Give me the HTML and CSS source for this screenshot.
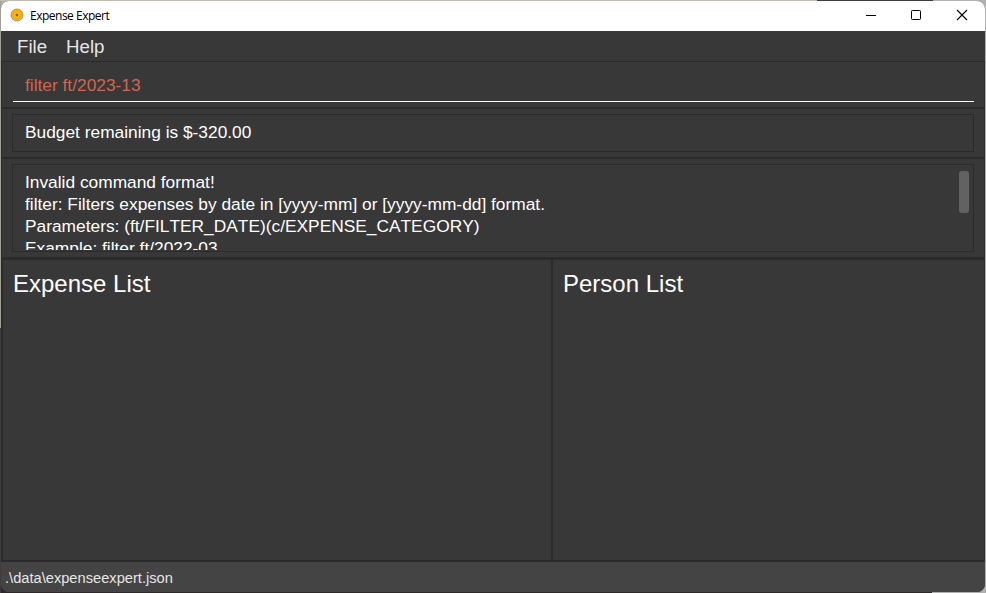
FILE: index.html
```html
<!DOCTYPE html>
<html lang="en">
<head>
<meta charset="utf-8">
<title>Expense Expert</title>
<link rel="stylesheet" href="styles.css">
</head>
<body>
<div class="window">
  <header class="titlebar">
    <svg class="logo" width="14" height="14" viewBox="0 0 14 14"><circle cx="7" cy="7" r="6" fill="#fdb40e" stroke="#8d8570" stroke-width=".8"/><circle cx="7" cy="7" r="4" fill="none" stroke="#f0a408" stroke-width=".7"/><circle cx="7" cy="7" r="1.3" fill="#6b6b60"/></svg>
    <span class="title">Expense Expert</span>
    <div class="controls">
      <svg width="12" height="12" viewBox="0 0 12 12"><path d="M1 6.5h10" stroke="#000"/></svg>
      <svg width="12" height="12" viewBox="0 0 12 12"><rect x="1.5" y="1.5" width="9" height="9" rx=".8" fill="none" stroke="#000"/></svg>
      <svg width="12" height="12" viewBox="0 0 12 12"><path d="M1 1l10 10M11 1L1 11" stroke="#000" stroke-width="1.1"/></svg>
    </div>
  </header>
  <nav class="menu"><span>File</span><span>Help</span></nav>
  <section class="command"><div class="field">filter ft/2023-13</div></section>
  <section class="budget"><div class="box">Budget remaining is $-320.00</div></section>
  <section class="result">
    <div class="box result-box">
      <div class="lines">
        <div>Invalid command format!</div>
        <div>filter: Filters expenses by date in [yyyy-mm] or [yyyy-mm-dd] format.</div>
        <div>Parameters: (ft/FILTER_DATE)(c/EXPENSE_CATEGORY)</div>
        <div>Example: filter ft/2022-03</div>
      </div>
      <div class="thumb"></div>
    </div>
  </section>
  <main class="lists">
    <section class="expenses"><h2>Expense List</h2></section>
    <section class="persons"><h2>Person List</h2></section>
  </main>
  <footer class="status">.\data\expenseexpert.json</footer>
</div>
</body>
</html>
```
FILE: styles.css
```css
* { box-sizing: border-box; }
body {
  margin: 0;
  height: 593px;
  padding: 1px;
  overflow: hidden;
  background:
    linear-gradient(#403c3e, #403c3e) 817px 0 / 116px 1px no-repeat,
    linear-gradient(#c1bbae, #c1bbae) 0 0 / 817px 1px no-repeat,
    linear-gradient(#a3a196, #a3a196) 0 0 / 1px 328px no-repeat,
    linear-gradient(#403c3c, #403c3c) 0 328px / 1px 265px no-repeat,
    linear-gradient(#2f2829, #2f2829) 0 585px / 932px 8px no-repeat,
    #b0b0b0;
  font-family: "Liberation Sans", Arial, sans-serif;
  font-kerning: none;
  color: #fff;
}
.window {
  display: flex;
  flex-direction: column;
  height: 591px;
  border-radius: 8px;
  overflow: hidden;
  background: #383838;
}
.titlebar {
  display: flex;
  align-items: center;
  flex: 0 0 30px;
  padding: 0 17px 0 9px;
  background: #fff;
  color: #000;
}
.logo { margin-top: -2px; }
.title {
  margin-left: 6px;
  font: 12px/16px "Open Sans", "Noto Sans", sans-serif;
  letter-spacing: -.5px;
}
.controls { display: flex; gap: 33px; margin-left: auto; }
.controls svg { display: block; margin-top: -2px; }
.controls svg:last-child { margin-left: 1px; }
.menu {
  display: flex;
  gap: 19px;
  flex: 0 0 30px;
  min-height: 0;
  padding-left: 16px;
  font-size: 18.67px;
  line-height: 31px;
  color: #e6e6e6;
}
.command, .budget, .result {
  padding: 0 11px;
  border: solid #2b2b2b;
  border-width: 0 1px 2px;
}
.command { flex: 0 0 48px; padding-right: 10px; border-top-width: 1px; }
.field {
  height: 40px;
  border-bottom: 1px solid #fff;
  padding-left: 12px;
  font-size: 17.33px;
  line-height: 47px;
  color: #d06651;
}
.budget { flex: 0 0 50px; padding: 5px 10px; }
.box { border: 1px solid #2b2b2b; font-size: 17.33px; line-height: 22px; }
.budget .box { height: 38px; padding: 6px 12px; }
.result { flex: 0 0 101px; padding: 5px 10px; border-bottom-width: 3px; }
.result-box {
  display: flex;
  justify-content: space-between;
  height: 88px;
  padding: 6px 4px 1px 12px;
}
.lines { height: 79px; overflow: hidden; white-space: nowrap; }
.thumb { width: 10px; height: 42px; border-radius: 3px; background: #626262; }
.lists { display: flex; flex: 1; border-bottom: 2px solid #2b2b2b; }
.expenses { width: 552px; border: solid #2b2b2b; border-width: 0 2px; padding: 0 10px; }
.persons { flex: 1; padding: 0 10px; border-right: 1px solid #2b2b2b; }
h2 { margin: 10px 0 0; font-size: 24px; font-weight: 400; line-height: 28px; }
.status {
  flex: 0 0 30px;
  min-height: 0;
  padding-left: 4px;
  background: #444;
  font-size: 14.67px;
  line-height: 32px;
  color: #e6e6e6;
}
```
